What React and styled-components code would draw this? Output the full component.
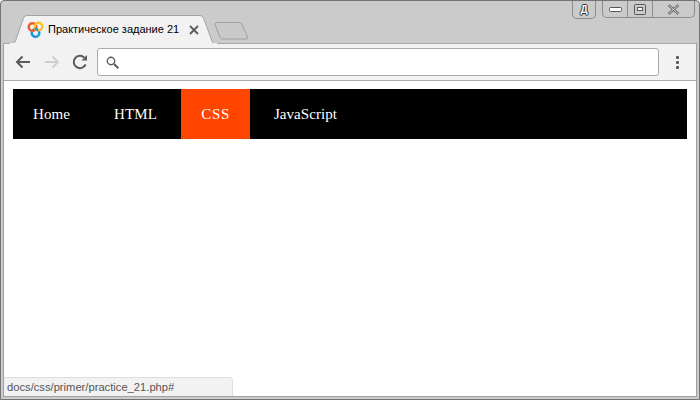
import styled, { createGlobalStyle } from "styled-components"

const Global = createGlobalStyle`
  html, body {
    margin: 0;
    padding: 0;
    width: 700px;
    height: 400px;
    overflow: hidden;
    background-color: #fff;
  }
`;

const Window = styled.div`
  box-sizing: border-box;
  width: 700px;
  height: 400px;
  display: flex;
  flex-direction: column;
  background-color: #cbcbcb;
  border: 1px solid #747474;
  border-radius: 4px 4px 0 0;
  padding: 0 2px 2px 2px;
  font-family: "Liberation Sans", Arial, sans-serif;
`;

const TitleBar = styled.div`
  height: 42px;
  flex: none;
  display: flex;
  justify-content: space-between;
  align-items: flex-start;
`;

const TabStrip = styled.div`
  align-self: flex-end;
  display: flex;
  align-items: flex-end;
  margin: 0 0 -1px 7px;
`;

const Tab = styled.div`
  position: relative;
  width: 207px;
  height: 29px;
  box-sizing: border-box;
  padding: 6px 0 0 17px;
  display: flex;
  align-items: flex-start;
`;

const TabShape = styled.svg`
  position: absolute;
  left: 0;
  top: 0;
`;

const Favicon = styled.svg`
  position: relative;
  flex: none;
`;

const TabTitle = styled.span`
  position: relative;
  margin-left: 4px;
  font-size: 11px;
  line-height: 17px;
  color: #000;
  white-space: nowrap;
`;

const TabClose = styled.svg`
  position: relative;
  margin: 4px 0 0 10px;
  flex: none;
`;

const NewTab = styled.svg`
  margin: 0 0 4px -3px;
  flex: none;
`;

const Controls = styled.div`
  display: flex;
  align-items: flex-start;
  gap: 6px;
  margin-right: 2px;
`;

const ControlGroup = styled.div`
  display: flex;
  height: 17px;
  box-sizing: border-box;
  border: 1px solid #8c8c8c;
  border-top: none;
  border-radius: 0 0 5px 5px;
`;

const LangBox = styled(ControlGroup)`
  width: 24px;
  height: 18px;
  justify-content: center;
  align-items: center;
  font-size: 10px;
  font-weight: 700;
  color: #fff;
  text-shadow: 1px 0 #333, -1px 0 #333, 0 1px #333, 0 -1px #333;
`;

const ControlButton = styled.div`
  width: ${(p) => p.$w}px;
  display: flex;
  justify-content: center;
  align-items: center;
  border-left: ${(p) => (p.$first ? "none" : "1px solid #8c8c8c")};
`;

const Content = styled.div`
  flex: 1;
  display: flex;
  flex-direction: column;
  border: 1px solid #a0a0a0;
  border-top: none;
`;

const Toolbar = styled.div`
  height: 38px;
  flex: none;
  box-sizing: border-box;
  display: flex;
  align-items: center;
  background-color: #f2f2f2;
  border-top: 1px solid #a9a9a9;
  border-bottom: 1px solid #a9a9a9;
  padding-left: 11px;
`;

const NavIcon = styled.svg`
  flex: none;
  margin-right: ${(p) => p.$gap}px;
`;

const MenuDots = styled.svg`
  flex: none;
  margin-left: 17px;
`;

const Omnibox = styled.div`
  width: 562px;
  height: 28px;
  box-sizing: border-box;
  flex: none;
  display: flex;
  align-items: center;
  padding-left: 8px;
  background-color: #fff;
  border: 1px solid #a9a9a9;
  border-radius: 3px;
`;

const Page = styled.div`
  position: relative;
  flex: 1;
  background-color: #fff;
  padding: 8px 9px;
`;

const Nav = styled.ul`
  list-style: none;
  margin: 0;
  padding: 0;
  height: 50px;
  display: flex;
  gap: 4px;
  background-color: #000;
`;

const NavItem = styled.li`
  padding: 0 20px;
  font-family: "Liberation Serif", "Times New Roman", serif;
  font-size: 15px;
  line-height: 50px;
  color: #fff;
  letter-spacing: ${(p) => p.$spacing || 0}px;
  background-color: ${(p) => (p.$active ? "#ff4500" : "transparent")};
`;

const StatusBubble = styled.div`
  position: absolute;
  left: 0;
  bottom: 0;
  width: 229px;
  height: 19px;
  box-sizing: border-box;
  padding-left: 3px;
  background-color: #f2f2f2;
  border-top: 1px solid #dedede;
  border-right: 1px solid #dedede;
  border-top-right-radius: 4px;
  font-size: 11.2px;
  line-height: 18px;
  color: #555;
`;

const App = () => {
  return (
    <Window>
      <Global />
      <TitleBar>
        <TabStrip>
          <Tab>
            <TabShape width="207" height="29" viewBox="0 0 207 29">
              <path d="M0 28.5 L2 28.5 Q4.5 28.5 5.5 26 L13.5 3 Q14.5 0.5 17 0.5 L190 0.5 Q192.5 0.5 193.5 3 L202 26 Q203 28.5 205 28.5 L207 28.5" fill="#f2f2f2" stroke="#a3a3a3" />
              <rect x="0" y="28" width="207" height="1" fill="#f2f2f2" />
            </TabShape>
            <Favicon width="17" height="17" viewBox="0 0 17 17" fill="none" strokeWidth="2.5">
              <circle cx="8.5" cy="12" r="3.8" stroke="#1e96dc" />
              <circle cx="5.5" cy="6" r="3.8" stroke="#ef5a2a" />
              <circle cx="11.5" cy="5.5" r="3.8" stroke="#fbc531" />
              <path d="M8 7 L11 9.5" stroke="#1e96dc" strokeWidth="2" />
            </Favicon>
            <TabTitle>Практическое задание 21</TabTitle>
            <TabClose width="10" height="10" viewBox="0 0 10 10">
              <path d="M1 1 L9 9 M9 1 L1 9" stroke="#5a5a5a" strokeWidth="1.8" />
            </TabClose>
          </Tab>
          <NewTab width="35" height="18" viewBox="0 0 35 18">
            <path d="M2.5 0.5 L25 0.5 Q27 0.5 28 2.5 L33.5 15 Q34 17 32 17 L9 17 Q7 17 6 15.5 L1 2.5 Q1 0.5 2.5 0.5 Z" fill="#c9c9c9" stroke="#a0a0a0" />
          </NewTab>
        </TabStrip>
        <Controls>
          <LangBox>Д</LangBox>
          <ControlGroup>
            <ControlButton $w={24} $first>
              <svg width="13" height="5" viewBox="0 0 13 5"><rect x="0.5" y="0.5" width="12" height="4" rx="1" fill="#fff" stroke="#555" /></svg>
            </ControlButton>
            <ControlButton $w={24}>
              <svg width="12" height="11" viewBox="0 0 12 11"><rect x="0.5" y="0.5" width="11" height="10" rx="1" fill="none" stroke="#555" /><rect x="3.5" y="3.5" width="5" height="3" fill="#fff" stroke="#555" /></svg>
            </ControlButton>
            <ControlButton $w={41}>
              <svg width="13" height="11" viewBox="0 0 13 11"><path d="M1.5 1 L11.5 10 M11.5 1 L1.5 10" stroke="#666" strokeWidth="2.4" /><path d="M1.5 1 L11.5 10 M11.5 1 L1.5 10" stroke="#eee" strokeWidth="0.8" /></svg>
            </ControlButton>
          </ControlGroup>
        </Controls>
      </TitleBar>
      <Content>
        <Toolbar>
          <NavIcon $gap={13} width="16" height="14" viewBox="0 0 16 14" fill="none" stroke="#5a5a5a" strokeWidth="2">
            <path d="M15 7 L2 7 M7.5 1.5 L2 7 L7.5 12.5" />
          </NavIcon>
          <NavIcon $gap={12} width="16" height="14" viewBox="0 0 16 14" fill="none" stroke="#cfcfcf" strokeWidth="2">
            <path d="M1 7 L14 7 M8.5 1.5 L14 7 L8.5 12.5" />
          </NavIcon>
          <NavIcon $gap={9} width="16" height="16" viewBox="0 0 16 16" fill="none">
            <path d="M13.6 10.5 A6.2 6.2 0 1 1 12.4 3.6" stroke="#5a5a5a" strokeWidth="2" />
            <path d="M9.5 6.5 L15 6.5 L15 1 Z" fill="#5a5a5a" />
          </NavIcon>
          <Omnibox>
            <svg width="13" height="13" viewBox="0 0 13 13" fill="none" stroke="#5a5a5a">
              <circle cx="5" cy="5" r="3.7" strokeWidth="1.4" />
              <path d="M8 8 L12.3 12.3" strokeWidth="2" />
            </svg>
          </Omnibox>
          <MenuDots width="3" height="13" viewBox="0 0 3 13" fill="#5a5a5a">
            <rect width="3" height="3" rx="1" />
            <rect y="5" width="3" height="3" rx="1" />
            <rect y="10" width="3" height="3" rx="1" />
          </MenuDots>
        </Toolbar>
        <Page>
          <Nav>
            <NavItem $spacing={0.1}>Home</NavItem>
            <NavItem $spacing={0.15}>HTML</NavItem>
            <NavItem $active $spacing={0.7}>CSS</NavItem>
            <NavItem $spacing={0.05}>JavaScript</NavItem>
          </Nav>
          <StatusBubble>docs/css/primer/practice_21.php#</StatusBubble>
        </Page>
      </Content>
    </Window>
  )
}

export default App
